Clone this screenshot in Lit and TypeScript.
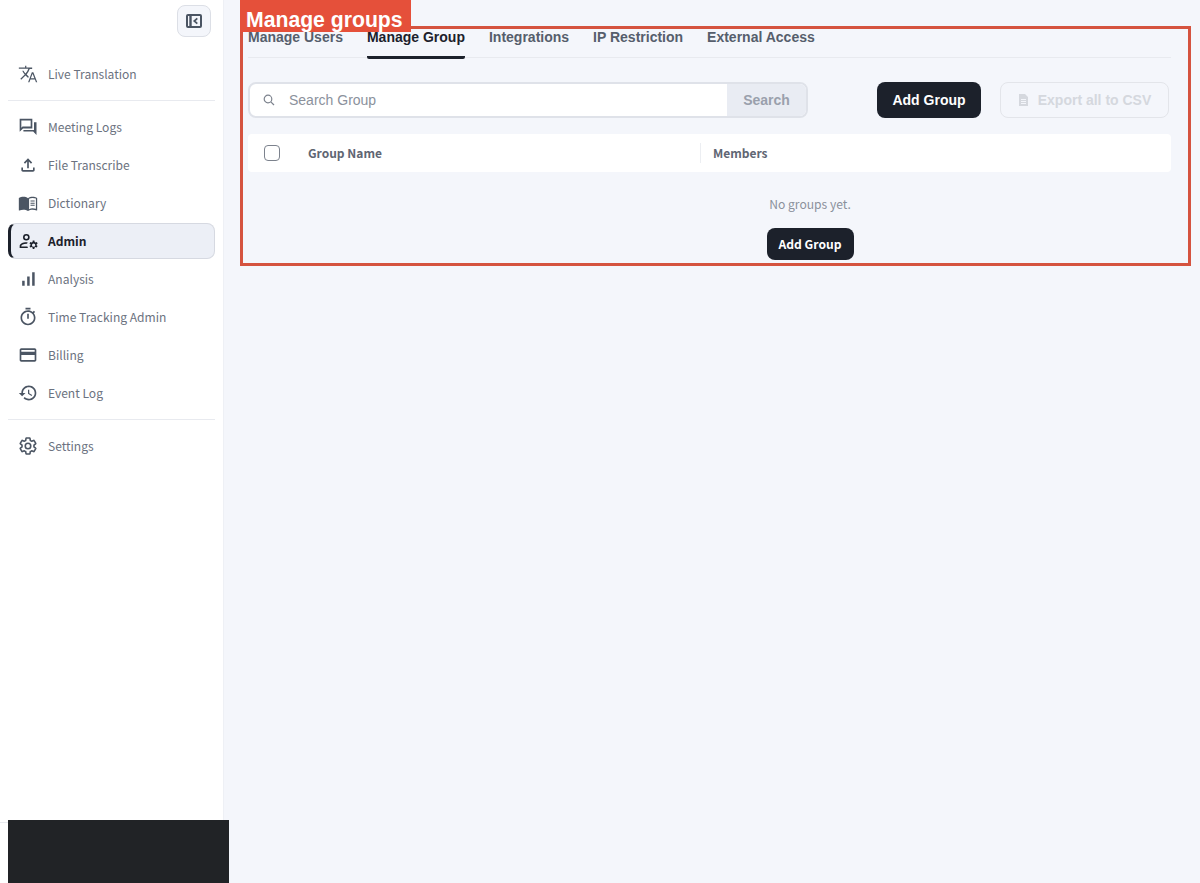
import { LitElement, html, css, svg } from 'lit';
import { customElement } from 'lit/decorators.js';

const icons = {
  translate: svg`<path d="M12.870 15.070l-2.540-2.510.03-.03c1.740-1.940 2.980-4.170 3.710-6.530H17V4.300h-7V2H8.500v2.300H1v1.500h11.400C11.700 7.800 10.500 9.750 9 11.400 8.070 10.370 7.300 9.250 6.600 8H5.100c.73 1.630 1.730 3.170 2.950 4.560L2.800 17.800l1.050 1.050L9 13.700l3.200 3.200.67-1.830zM18.400 10h-1.800L12.100 22h1.600l1.200-3.300h5.400l1.200 3.300h1.600l-4.700-12zm-3 7.200l2.100-5.500 2.100 5.500h-4.200z"/>`,
  forum: svg`<path d="M15.200 4.200v7.300H5.400L4 12.900V4.200h11.200M17.200 2.200H2V17.700l4-4h11.200V2.200zM19.200 6.200v9.300H6.500v2h11.700l4 4V6.200h-3z"/>`,
  upload: svg`<path d="M18 15v3H6v-3H4v3c0 1.100.9 2 2 2h12c1.100 0 2-.9 2-2v-3h-2zM7 9l1.410 1.410L11 7.830V16h2V7.830l2.590 2.580L17 9l-5-5-5 5z"/>`,
  book: svg`<path d="M12 6.200C10.500 5 8.400 4.500 6.500 4.500S2.600 4.900 1 6v14.600c0 .3.3.5.6.4 1.400-.7 3.200-1 4.900-1 1.900 0 4 .5 5.500 1.500V6.200z"/><path d="M17.500 4.500c-1.900 0-4 .5-5.500 1.700v15.300c1.500-1 3.600-1.500 5.500-1.500 1.700 0 3.500.3 4.900 1 .3.1.6-.1.6-.4V6c-1.600-1.100-3.600-1.500-5.500-1.500zm4 14.500c-1.300-.4-2.700-.6-4-.6-1.500 0-3.100.4-4.200 1V7c1.100-.7 2.700-1.100 4.200-1.100 1.400 0 2.800.2 4 .7v12.400z"/><path d="M15 9h5v1.200h-5zM15 11.600h5v1.200h-5zM15 14.200h5v1.200h-5z"/>`,
  admin: svg`<path d="M10 3.500a4 4 0 1 0 0 8 4 4 0 0 0 0-8zm0 1.900a2.100 2.100 0 1 1 0 4.200 2.100 2.100 0 0 1 0-4.200zM2 20.300v-2c0-3 3.800-4.800 8.200-4.800.5 0 .9 0 1.300.1l-.6 1.800h-.7c-3.600 0-6.300 1.300-6.300 2.900v.2h7.400l.6 1.800H2z"/><path fill-rule="evenodd" d="M17.800 11.500h1.900l.3 1.600c.4.200.8.400 1.100.700l1.500-.6 1 1.700-1.200 1c0 .4 0 .8-.1 1.200l1.200 1-1 1.700-1.500-.6c-.3.300-.7.500-1.100.700l-.3 1.600h-1.900l-.3-1.600c-.4-.2-.8-.4-1.100-.7l-1.500.6-1-1.700 1.200-1c-.1-.4-.1-.8 0-1.200l-1.200-1 1-1.700 1.500.6c.3-.3.700-.5 1.100-.7l.3-1.600zm.95 3.500a2 2 0 1 0 0 4 2 2 0 0 0 0-4z"/>`,
  bars: svg`<path d="M17 4h3v16h-3V4zM5 14h3v6H5v-6zm6-5h3v11h-3V9z"/>`,
  timer: svg`<path d="M15 1H9v2h6V1zm-4 13h2V8h-2v6zm8.030-6.610l1.420-1.420c-.43-.51-.9-.99-1.410-1.410l-1.420 1.420C16.070 4.740 14.120 4 12 4c-4.970 0-9 4.030-9 9s4.020 9 9 9 9-4.030 9-9c0-2.120-.74-4.070-1.970-5.610zM12 20c-3.870 0-7-3.130-7-7s3.130-7 7-7 7 3.130 7 7-3.130 7-7 7z"/>`,
  card: svg`<path d="M20 4H4c-1.110 0-1.990.89-1.990 2L2 18c0 1.110.89 2 2 2h16c1.110 0 2-.89 2-2V6c0-1.110-.89-2-2-2zm0 14H4v-6h16v6zm0-10H4V6h16v2z"/>`,
  history: svg`<path d="M13 3c-4.970 0-9 4.030-9 9H1l3.890 3.890.07.14L9 12H6c0-3.870 3.130-7 7-7s7 3.130 7 7-3.130 7-7 7c-1.930 0-3.680-.79-4.940-2.060l-1.420 1.420C8.270 19.990 10.510 21 13 21c4.970 0 9-4.030 9-9s-4.030-9-9-9zm-1 5v5l4.280 2.540.72-1.210-3.500-2.080V8H12z"/>`,
  gear: svg`<path fill="none" stroke="currentColor" stroke-width="1.900" stroke-linejoin="round" d="M19.140 12.940c.04-.3.06-.61.06-.94 0-.32-.02-.64-.07-.94l2.030-1.580c.18-.14.23-.41.12-.61l-1.920-3.320c-.12-.22-.37-.29-.59-.22l-2.390.96c-.5-.38-1.030-.7-1.620-.94l-.36-2.540c-.04-.24-.24-.41-.48-.41h-3.840c-.24 0-.43.17-.47.41l-.36 2.540c-.59.24-1.130.57-1.620.94l-2.390-.96c-.22-.08-.47 0-.59.22L2.740 8.870c-.12.21-.08.47.12.61l2.030 1.580c-.05.3-.09.63-.09.94s.02.64.07.94l-2.030 1.580c-.18.14-.23.41-.12.61l1.920 3.320c.12.22.37.29.59.22l2.390-.96c.5.38 1.030.7 1.620.94l.36 2.540c.05.24.24.41.48.41h3.840c.24 0 .44-.17.47-.41l.36-2.540c.59-.24 1.130-.56 1.620-.94l2.390.96c.22.08.47 0 .59-.22l1.920-3.320c.12-.22.07-.47-.12-.61l-2.010-1.580z"/><circle cx="12" cy="12" r="3.300" fill="none" stroke="currentColor" stroke-width="1.900"/>`,
};

type NavItem = { label: string; icon: keyof typeof icons; active?: boolean };

const topNav: NavItem[] = [{ label: 'Live Translation', icon: 'translate' }];
const midNav: NavItem[] = [
  { label: 'Meeting Logs', icon: 'forum' },
  { label: 'File Transcribe', icon: 'upload' },
  { label: 'Dictionary', icon: 'book' },
  { label: 'Admin', icon: 'admin', active: true },
  { label: 'Analysis', icon: 'bars' },
  { label: 'Time Tracking Admin', icon: 'timer' },
  { label: 'Billing', icon: 'card' },
  { label: 'Event Log', icon: 'history' },
];
const bottomNav: NavItem[] = [{ label: 'Settings', icon: 'gear' }];

const tabs = ['Manage Users', 'Manage Group', 'Integrations', 'IP Restriction', 'External Access'];

@customElement('app-root')
export class AppRoot extends LitElement {
  static styles = css`
    :host {
      display: block;
      position: relative;
      height: 883px;
      overflow: hidden;
      background: #f4f6fb;
      font-family: 'Liberation Sans', Arial, sans-serif;
    }
    .app {
      display: flex;
      height: 883px;
    }
    .sidebar {
      width: 223px;
      flex: none;
      display: flex;
      flex-direction: column;
      background: #fff;
      border-right: 1px solid #eef0f5;
      font-family: 'Noto Sans CJK JP', 'Noto Sans', sans-serif;
    }
    .collapse-row {
      display: flex;
      justify-content: flex-end;
      padding: 5px 12px 0 0;
    }
    .collapse {
      width: 34px;
      height: 32px;
      box-sizing: border-box;
      display: flex;
      align-items: center;
      justify-content: center;
      background: #f4f6fb;
      border: 1px solid #dcdfe6;
      border-radius: 8px;
    }
    .collapse svg {
      width: 16px;
      height: 16px;
      display: block;
    }
    .nav {
      padding: 0 8px;
    }
    .nav.first {
      margin-top: 18px;
    }
    .item {
      display: flex;
      align-items: center;
      height: 38px;
      width: 207px;
      box-sizing: border-box;
      padding: 0 0 2px 10px;
      font-size: 12.050px;
      color: #6b7280;
    }
    .item svg {
      width: 20px;
      height: 20px;
      flex: none;
      fill: currentColor;
      color: #4b5563;
      margin: 2px 10px 0 0;
    }
    .item.active {
      height: 36px;
      margin: 1px 0;
      padding-left: 7px;
      background: #eceff6;
      border: 1px solid #d6d9e1;
      border-left: 3px solid #1c212b;
      border-radius: 8px;
      color: #1c212b;
      font-weight: 700;
    }
    .item.active svg {
      color: #1c212b;
    }
    .divider {
      height: 1px;
      background: #e8eaef;
      margin: 7px 8px;
    }
    .foot {
      margin-top: auto;
      height: 60px;
      border-top: 1px solid #e8eaef;
    }
    .main {
      flex: 1;
      min-width: 0;
      padding: 18px 29px 0 24px;
    }
    .tabs {
      display: flex;
      gap: 24px;
      height: 40px;
      box-sizing: border-box;
      border-bottom: 1px solid #e8eaef;
    }
    .tab {
      height: 41px;
      box-sizing: border-box;
      padding-top: 11px;
      font-size: 14px;
      line-height: 16px;
      font-weight: 700;
      color: #565e6c;
      white-space: nowrap;
    }
    .tab.active {
      color: #1c212b;
      border-bottom: 3px solid #1c212b;
      border-radius: 2px;
    }
    .toolbar {
      display: flex;
      align-items: center;
      margin-top: 24px;
      padding-right: 2px;
      gap: 19px;
    }
    .search {
      width: 560px;
      height: 36px;
      box-sizing: border-box;
      display: flex;
      background: #fff;
      border: 2px solid #dfe2e9;
      border-radius: 8px;
      overflow: hidden;
      margin-right: auto;
    }
    .search-field {
      flex: 1;
      display: flex;
      align-items: center;
      padding-left: 13px;
      font-size: 14px;
      color: #8b919c;
    }
    .search-field svg {
      width: 12px;
      height: 12px;
      margin-right: 14px;
      fill: none;
      stroke: #7c828d;
      stroke-width: 1.200;
    }
    .search-btn {
      width: 79px;
      display: flex;
      align-items: center;
      justify-content: center;
      background: #e9ecf3;
      color: #9aa0ac;
      font-size: 14px;
      font-weight: 700;
    }
    .btn {
      height: 36px;
      box-sizing: border-box;
      display: flex;
      align-items: center;
      justify-content: center;
      border-radius: 8px;
      font-size: 14px;
      font-weight: 700;
      white-space: nowrap;
    }
    .btn.primary {
      width: 104px;
      background: #1c212b;
      color: #fff;
    }
    .btn.export {
      width: 169px;
      gap: 9px;
      border: 1.500px solid #e3e5ea;
      color: #d5d8de;
    }
    .btn.export svg {
      width: 11px;
      height: 12px;
      fill: #d5d8de;
    }
    .thead {
      display: flex;
      align-items: center;
      height: 38px;
      margin-top: 16px;
      background: #fff;
      border-radius: 4px;
      font-family: 'Noto Sans CJK JP', 'Noto Sans', sans-serif;
      font-size: 12px;
      font-weight: 700;
      color: #5f6673;
    }
    .check {
      width: 16px;
      height: 16px;
      box-sizing: border-box;
      margin: 0 28px 0 16px;
      border: 1px solid #7c828d;
      border-radius: 4px;
      flex: none;
    }
    .col-name {
      width: 392px;
      box-sizing: border-box;
      line-height: 20px;
    }
    .col-members {
      border-left: 1px solid #eceef2;
      padding-left: 12px;
      line-height: 20px;
    }
    .empty {
      display: flex;
      flex-direction: column;
      align-items: center;
      padding: 23px 0 0 201px;
      gap: 15px;
      font-family: 'Noto Sans CJK JP', 'Noto Sans', sans-serif;
    }
    .empty-text {
      font-size: 12.100px;
      line-height: 18px;
      color: #8b919c;
    }
    .btn.small {
      width: 87px;
      height: 32px;
      padding-bottom: 2px;
      background: #1c212b;
      color: #fff;
      font-size: 12.100px;
    }
    .mask {
      position: absolute;
      left: 8px;
      top: 820px;
      width: 221px;
      height: 63px;
      background: #212326;
    }
    .callout {
      position: absolute;
      left: 240px;
      top: 26px;
      width: 951px;
      height: 240px;
      box-sizing: border-box;
      border: 3px solid #d5533f;
    }
    .callout-label {
      position: absolute;
      left: 240px;
      top: 0;
      width: 171px;
      height: 32px;
      box-sizing: border-box;
      padding-left: 6px;
      background: #e5503a;
      color: #fff;
      font-size: 21.200px;
      font-weight: 700;
      line-height: 40px;
      white-space: nowrap;
      overflow: hidden;
    }
  `;

  private renderItem(item: NavItem) {
    return html`<div class="item ${item.active ? 'active' : ''}">
      <svg viewBox="0 0 24 24">${icons[item.icon]}</svg>${item.label}
    </div>`;
  }

  render() {
    return html`
      <div class="app">
        <aside class="sidebar">
          <div class="collapse-row">
            <div class="collapse">
              <svg viewBox="0 0 16 16" fill="none" stroke="#4b5563">
                <rect x="1" y="2" width="14" height="12" rx="1" stroke-width="2"></rect>
                <path d="M4.500 2v12" stroke-width="2.400"></path>
                <path d="M11.300 5.300L8.300 8l3 2.700" stroke-width="1.800"></path>
              </svg>
            </div>
          </div>
          <nav class="nav first">${topNav.map((i) => this.renderItem(i))}</nav>
          <div class="divider"></div>
          <nav class="nav">${midNav.map((i) => this.renderItem(i))}</nav>
          <div class="divider"></div>
          <nav class="nav">${bottomNav.map((i) => this.renderItem(i))}</nav>
          <div class="foot"></div>
        </aside>
        <main class="main">
          <div class="tabs">
            ${tabs.map((t) => html`<div class="tab ${t === 'Manage Group' ? 'active' : ''}">${t}</div>`)}
          </div>
          <div class="toolbar">
            <div class="search">
              <div class="search-field">
                <svg viewBox="0 0 12 12"><circle cx="5" cy="5" r="3.800"></circle><path d="M7.800 7.800L11 11"></path></svg>
                Search Group
              </div>
              <div class="search-btn">Search</div>
            </div>
            <div class="btn primary">Add Group</div>
            <div class="btn export">
              <svg viewBox="0 0 11 12"><path d="M1 0h6l3 3v9H1zM3 5v1h5V5zm0 2v1h5V7zm0 2v1h5V9z" fill-rule="evenodd"></path></svg>
              Export all to CSV
            </div>
          </div>
          <div class="thead">
            <div class="check"></div>
            <div class="col-name">Group Name</div>
            <div class="col-members">Members</div>
          </div>
          <div class="empty">
            <div class="empty-text">No groups yet.</div>
            <div class="btn small">Add Group</div>
          </div>
        </main>
      </div>
      <div class="mask"></div>
      <div class="callout"></div>
      <div class="callout-label">Manage groups</div>
    `;
  }
}
